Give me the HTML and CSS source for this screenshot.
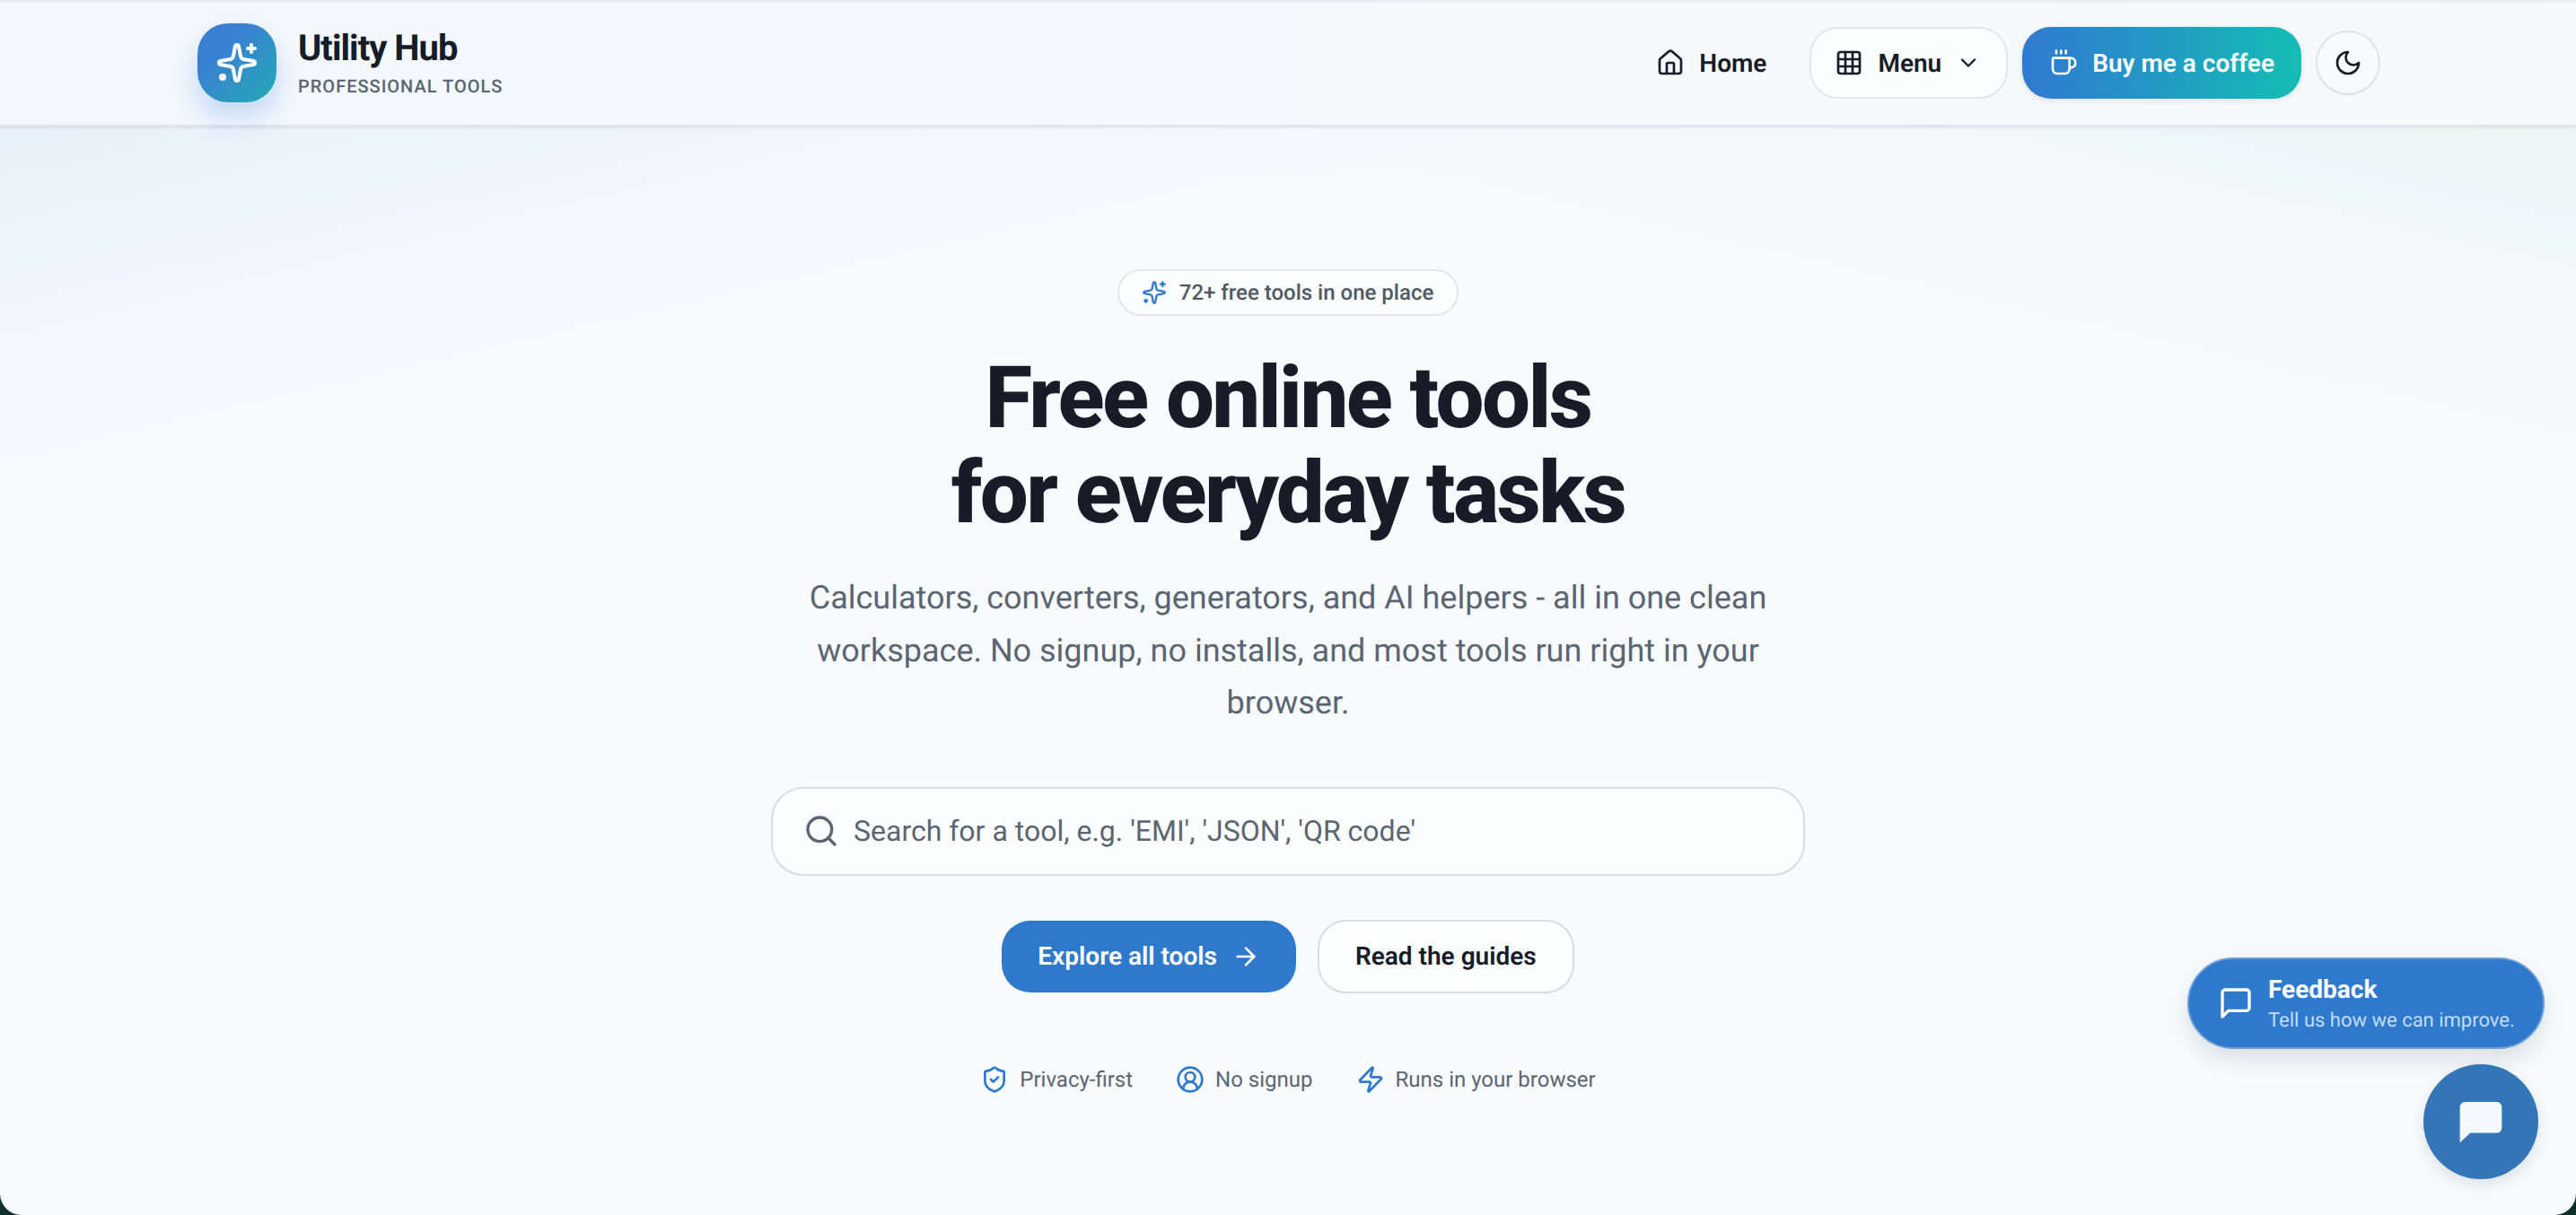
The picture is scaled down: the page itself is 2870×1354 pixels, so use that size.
FILE: index.html
```html
<!DOCTYPE html>
<html lang="en">

<head>
    <meta charset="UTF-8">
    <title>Utility Hub</title>
    <link rel="stylesheet" href="styles.css">
</head>

<body>
    <div class="page">
        <header class="topbar">
            <div class="brand">
                <div class="brand-logo">
                    <svg class="icon" width="48" height="48" viewBox="0 0 24 24"><path d="M11.017 2.814a1 1 0 0 1 1.966 0l1.051 5.558a2 2 0 0 0 1.594 1.594l5.558 1.051a1 1 0 0 1 0 1.966l-5.558 1.051a2 2 0 0 0-1.594 1.594l-1.051 5.558a1 1 0 0 1-1.966 0l-1.051-5.558a2 2 0 0 0-1.594-1.594l-5.558-1.051a1 1 0 0 1 0-1.966l5.558-1.051a2 2 0 0 0 1.594-1.594z"/><path d="M20 2v4M22 4h-4"/><circle class="dot" cx="4" cy="20" r="1"/></svg>
                </div>
                <div>
                    <div class="brand-name">Utility Hub</div>
                    <div class="brand-sub">PROFESSIONAL TOOLS</div>
                </div>
            </div>
            <nav class="nav">
                <a class="nav-home">
                    <svg class="icon" width="32" height="32" viewBox="0 0 24 24"><path d="M15 21v-8a1 1 0 0 0-1-1h-4a1 1 0 0 0-1 1v8"/><path d="M3 10a2 2 0 0 1 .709-1.528l7-6a2 2 0 0 1 2.582 0l7 6A2 2 0 0 1 21 10v9a2 2 0 0 1-2 2H5a2 2 0 0 1-2-2z"/></svg>
                    Home
                </a>
                <a class="nav-menu">
                    <svg class="icon" width="32" height="32" viewBox="0 0 24 24"><rect x="3" y="3" width="18" height="18" rx="2"/><path d="M3 9h18M3 15h18M9 3v18M15 3v18"/></svg>
                    Menu
                    <svg class="icon" width="28" height="28" viewBox="0 0 24 24"><path d="m6 9 6 6 6-6"/></svg>
                </a>
                <a class="nav-coffee">
                    <svg class="icon" width="32" height="32" viewBox="0 0 24 24"><path d="M10 2v2M14 2v2M6 2v2"/><path d="M16 8a1 1 0 0 1 1 1v8a4 4 0 0 1-4 4H7a4 4 0 0 1-4-4V9a1 1 0 0 1 1-1h14a4 4 0 1 1 0 8h-1"/></svg>
                    Buy me a coffee
                </a>
                <button class="nav-theme">
                    <svg class="icon" width="32" height="32" viewBox="0 0 24 24"><path d="M12 3a6 6 0 0 0 9 9 9 9 0 1 1-9-9Z"/></svg>
                </button>
            </nav>
        </header>

        <main class="hero">
            <div class="pill">
                <svg class="icon pill-icon" width="28" height="28" viewBox="0 0 24 24"><path d="M11.017 2.814a1 1 0 0 1 1.966 0l1.051 5.558a2 2 0 0 0 1.594 1.594l5.558 1.051a1 1 0 0 1 0 1.966l-5.558 1.051a2 2 0 0 0-1.594 1.594l-1.051 5.558a1 1 0 0 1-1.966 0l-1.051-5.558a2 2 0 0 0-1.594-1.594l-5.558-1.051a1 1 0 0 1 0-1.966l5.558-1.051a2 2 0 0 0 1.594-1.594z"/><path d="M20 2v4M22 4h-4"/><circle class="dot" cx="4" cy="20" r="1"/></svg>
                72+ free tools in one place
            </div>
            <h1>Free online tools<br>for everyday tasks</h1>
            <p class="lead">Calculators, converters, generators, and AI helpers - all in one clean workspace. No signup, no installs, and most tools run right in your browser.</p>
            <div class="search">
                <svg class="icon" width="40" height="40" viewBox="0 0 24 24"><circle cx="11" cy="11" r="8"/><path d="m21 21-4.3-4.3"/></svg>
                <span>Search for a tool, e.g. 'EMI', 'JSON', 'QR code'</span>
            </div>
            <div class="actions">
                <a class="btn-primary">
                    Explore all tools
                    <svg class="icon" width="32" height="32" viewBox="0 0 24 24"><path d="M5 12h14M12 5l7 7-7 7"/></svg>
                </a>
                <a class="btn-outline">Read the guides</a>
            </div>
            <ul class="trust">
                <li>
                    <svg class="icon" width="32" height="32" viewBox="0 0 24 24"><path d="M20 13c0 5-3.5 7.5-7.66 8.95a1 1 0 0 1-.67-.01C7.5 20.5 4 18 4 13V6a1 1 0 0 1 1-1c2 0 4.5-1.2 6.24-2.72a1.17 1.17 0 0 1 1.52 0C14.51 3.81 17 5 19 5a1 1 0 0 1 1 1z"/><path d="m9 12 2 2 4-4"/></svg>
                    Privacy-first
                </li>
                <li>
                    <svg class="icon" width="32" height="32" viewBox="0 0 24 24"><path d="M18 20a6 6 0 0 0-12 0"/><circle cx="12" cy="10" r="4"/><circle cx="12" cy="12" r="10"/></svg>
                    No signup
                </li>
                <li>
                    <svg class="icon" width="32" height="32" viewBox="0 0 24 24"><path d="M4 14a1 1 0 0 1-.78-1.63l9.9-10.2a.5.5 0 0 1 .86.46l-1.92 6.02A1 1 0 0 0 13 10h7a1 1 0 0 1 .78 1.63l-9.9 10.2a.5.5 0 0 1-.86-.46l1.92-6.02A1 1 0 0 0 11 14z"/></svg>
                    Runs in your browser
                </li>
            </ul>
        </main>

        <!-- Botones flotantes -->
        <a class="feedback">
            <svg class="icon" width="40" height="40" viewBox="0 0 24 24"><path d="M21 15a2 2 0 0 1-2 2H7l-4 4V5a2 2 0 0 1 2-2h14a2 2 0 0 1 2 2z"/></svg>
            <span>
                <span class="feedback-title">Feedback</span>
                <span class="feedback-sub">Tell us how we can improve.</span>
            </span>
        </a>
        <button class="chat">
            <svg width="56" height="56" viewBox="0 0 24 24"><path d="M22 15a2.4 2.4 0 0 1-2.4 2.4H7L2 22V5a2.4 2.4 0 0 1 2.4-2.4h15.2A2.4 2.4 0 0 1 22 5z"/></svg>
        </button>
    </div>
</body>

</html>
```

FILE: styles.css
```css
* {
    box-sizing: border-box;
}
html, body {
    margin: 0;
    height: 100%;
}
body {
    font-family: Roboto, sans-serif;
    color: #161d28;
    text-rendering: geometricPrecision;
    background-color: #0f2f2a;
    overflow: hidden;
}
.icon {
    fill: none;
    stroke: currentColor;
    stroke-width: 2;
    stroke-linecap: round;
    stroke-linejoin: round;
    flex-shrink: 0;
}
.dot {
    fill: currentColor;
}
.page {
    position: relative;
    height: 1354px;
    overflow: hidden;
    border-radius: 0 0 24px 24px;
    background-color: #f7fbfe;
    background-image:
        linear-gradient(167deg, #e7f1fb 7%, rgba(231, 241, 251, 0) 27%),
        linear-gradient(193deg, #ebf6f7 7%, rgba(235, 246, 247, 0) 27%);
}

/* Barra superior */
.topbar {
    display: flex;
    align-items: center;
    justify-content: space-between;
    height: 141px;
    padding: 0 218px 2px 220px;
    border-top: 3px solid #e8eef2;
    border-bottom: 2px solid #dfe6ec;
    background: linear-gradient(90deg, #f3f8fe, #f7fafb);
    box-shadow: 0 1px 3px rgba(22, 29, 40, .12);
}
.brand {
    display: flex;
    align-items: center;
    gap: 24px;
}
.brand-logo {
    display: flex;
    align-items: center;
    justify-content: center;
    width: 88px;
    height: 88px;
    border-radius: 34px;
    color: #ffffff;
    background: linear-gradient(135deg, #3a7fd5 0, #3a80d2 30%, #22aab5 100%);
    box-shadow: 0 16px 30px rgba(48, 121, 210, .25);
}
.brand-name {
    font-size: 40px;
    font-weight: 700;
    line-height: 48px;
    letter-spacing: -1px;
}
.brand-sub {
    margin-top: 4px;
    color: #5b6572;
    font-size: 20px;
    font-weight: 500;
    line-height: 28px;
    letter-spacing: 1px;
}
.nav {
    display: flex;
    align-items: center;
    gap: 16px;
    font-size: 28px;
    font-weight: 600;
}
.nav a {
    display: flex;
    align-items: center;
    gap: 16px;
    height: 80px;
}
.nav-home {
    padding: 0 32px;
}
.nav-menu {
    padding: 0 28px 0 26px;
    border: 2px solid #e2e7ec;
    border-radius: 32px;
    background-color: #fbfdfe;
}
.nav-coffee {
    padding: 0 30px;
    border-radius: 32px;
    color: #ffffff;
    background: linear-gradient(90deg, #3079d2, #14bdb4);
    box-shadow: 0 2px 6px rgba(22, 29, 40, .12);
}
.nav-theme {
    display: flex;
    align-items: center;
    justify-content: center;
    width: 72px;
    height: 72px;
    padding: 0;
    border: 2px solid #dde3e8;
    border-radius: 50%;
    color: #161d28;
    background-color: #f8fbfd;
}

/* Contenido principal */
.hero {
    display: flex;
    flex-direction: column;
    align-items: center;
    padding-top: 159px;
}
.pill {
    display: flex;
    align-items: center;
    gap: 14px;
    height: 52px;
    padding: 0 26px 0 25px;
    border: 2px solid #e2e7ec;
    border-radius: 26px;
    color: #4f5966;
    font-size: 24px;
    font-weight: 500;
    background-color: #fbfdfe;
}
.pill-icon {
    color: #2f79cd;
}
h1 {
    margin: 39px 0 0;
    font-size: 96px;
    font-weight: 800;
    line-height: 106px;
    letter-spacing: -2.6px;
    text-align: center;
}
.lead {
    width: 1152px;
    margin: 34px 0 0;
    color: #5b6572;
    font-size: 36px;
    line-height: 58.5px;
    text-align: center;
}
.search {
    display: flex;
    align-items: center;
    gap: 16px;
    width: 1152px;
    height: 99px;
    margin-top: 64px;
    padding: 0 34px;
    border: 2px solid #d8dde2;
    border-radius: 36px;
    color: #5b6572;
    font-size: 32px;
    background-color: #fbfdfe;
}
.actions {
    display: flex;
    align-items: center;
    gap: 24px;
    margin-top: 49px;
    font-size: 28px;
    font-weight: 600;
}
.btn-primary {
    display: flex;
    align-items: center;
    gap: 16px;
    height: 80px;
    padding: 0 40px;
    border-radius: 32px;
    color: #ffffff;
    background-color: #2f79cd;
}
.btn-outline {
    display: flex;
    align-items: center;
    height: 82px;
    padding: 0 40px;
    border: 2px solid #d8dde2;
    border-radius: 32px;
    background-color: #fcfeff;
}
.trust {
    display: flex;
    align-items: center;
    gap: 48px;
    margin: 80px 0 0;
    padding: 0;
    color: #5b6572;
    font-size: 24px;
    list-style: none;
}
.trust li {
    display: flex;
    align-items: center;
    gap: 12px;
}
.trust .icon {
    color: #2f79cd;
}

/* Flotantes */
.feedback {
    position: absolute;
    top: 1067px;
    left: 2437px;
    display: flex;
    align-items: center;
    gap: 16px;
    width: 398px;
    height: 102px;
    padding: 4px 32px 0;
    border: 2px solid #6d9fd9;
    border-radius: 51px;
    color: #ffffff;
    white-space: nowrap;
    background-color: #2f79cd;
    box-shadow: 0 12px 24px rgba(22, 29, 40, .12);
}
.feedback .icon {
    margin-top: -4px;
}
.feedback-title {
    display: block;
    font-size: 28px;
    font-weight: 700;
    line-height: 36px;
}
.feedback-sub {
    display: block;
    color: #c4dcf5;
    font-size: 22px;
    line-height: 34px;
}
.chat {
    position: absolute;
    top: 1186px;
    left: 2700px;
    display: flex;
    align-items: center;
    justify-content: center;
    width: 128px;
    height: 128px;
    padding: 0;
    border: none;
    border-radius: 50%;
    background-color: #3276b8;
    box-shadow: 0 6px 16px rgba(22, 29, 40, .12);
}
.chat svg {
    fill: #f4f9fd;
}
```
